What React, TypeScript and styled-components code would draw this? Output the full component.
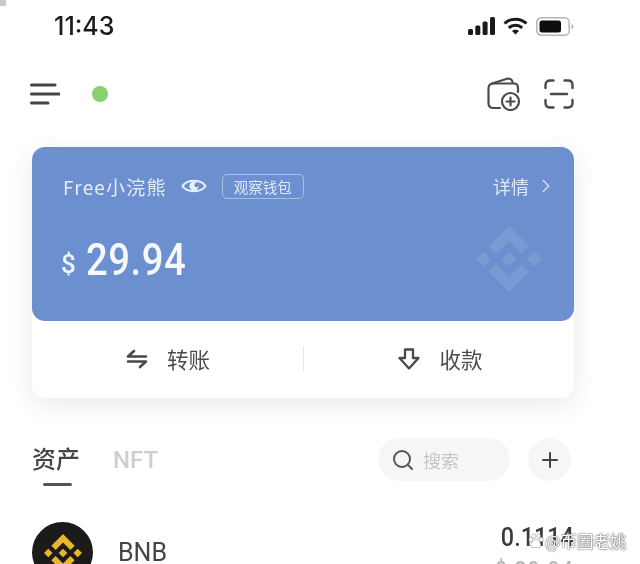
import { FC } from "react";
import styled, { createGlobalStyle } from "styled-components";
import { ChevronRight, Plus, Search } from "lucide-react";

const GlobalStyle = createGlobalStyle`
    html,
    body {
        margin: 0;
        padding: 0;
        background: #fff;
    }
    body {
        width: 640px;
        height: 564px;
        overflow: hidden;
        font-family: "Noto Sans CJK SC", "Roboto", sans-serif;
    }
`;

const Page = styled.div`
    position: relative;
    width: 640px;
    height: 564px;
    overflow: hidden;
    box-sizing: border-box;
    padding: 0 66px 0 32px;
    background: #fff;
    filter: blur(0.5px);
`;

const CornerMark = styled.div`
    position: absolute;
    left: 0;
    top: 0;
    width: 6px;
    height: 6px;
    background: #c9c9c9;
`;

const StatusBar = styled.div`
    height: 52px;
    display: flex;
    align-items: center;
    justify-content: space-between;
    padding-left: 22px;
`;

const Time = styled.div`
    font-family: "Inter", "Roboto", sans-serif;
    font-size: 25px;
    font-weight: 500;
    color: #1b1b1b;
`;

const StatusIcons = styled.div`
    display: flex;
    align-items: center;
    gap: 8px;
`;

const Header = styled.div`
    height: 36px;
    margin-top: 24px;
    display: flex;
    align-items: center;
    justify-content: space-between;
`;

const HeaderLeft = styled.div`
    display: flex;
    align-items: center;
    gap: 32px;
    margin-left: -2px;
`;

const HeaderRight = styled.div`
    display: flex;
    align-items: center;
    gap: 23px;
`;

const StatusDot = styled.span`
    width: 16px;
    height: 16px;
    border-radius: 50%;
    background: #85d26f;
`;

const Card = styled.div`
    margin-top: 35px;
    height: 251px;
    border-radius: 13px;
    background: #fff;
    box-shadow: 0 6px 26px rgba(0, 0, 0, 0.09);
    display: flex;
    flex-direction: column;
`;

const CardTop = styled.div`
    position: relative;
    height: 174px;
    box-sizing: border-box;
    padding: 24px 17px 0 31px;
    border-radius: 13px;
    background: #6b8fcf;
    color: #e6edf8;
`;

const NameRow = styled.div`
    display: flex;
    align-items: center;
    height: 30px;
`;

const WalletName = styled.span`
    font-size: 19px;
    letter-spacing: 1.2px;
    color: #e4ebf7;
`;

const EyeWrap = styled.span`
    display: flex;
    margin-left: 14px;
`;

const Tag = styled.span`
    margin-left: 15px;
    height: 25px;
    width: 82px;
    box-sizing: border-box;
    display: flex;
    align-items: center;
    justify-content: center;
    border: 1px solid #a9c0e6;
    border-radius: 5px;
    font-size: 14.5px;
    color: #dfe8f6;
`;

const Details = styled.span`
    margin-left: auto;
    display: flex;
    align-items: center;
    gap: 6px;
    font-size: 18px;
    color: #e0e8f6;
`;

const Balance = styled.div`
    margin-top: 30px;
    margin-left: -2px;
    display: flex;
    align-items: center;
    height: 58px;
`;

const Currency = styled.span`
    font-family: "Roboto", sans-serif;
    font-size: 26px;
    font-weight: 500;
    color: #eef3fb;
    margin-top: 8px;
`;

const Amount = styled.span`
    display: inline-block;
    margin-left: 10px;
    font-family: "Roboto", sans-serif;
    font-size: 44px;
    font-weight: 500;
    letter-spacing: 0.6px;
    color: #f6f8fc;
    transform: scaleX(0.87);
    transform-origin: left center;
`;

const CardLogo = styled.div`
    position: absolute;
    right: 32px;
    top: 79px;
    display: flex;
`;

const Actions = styled.div`
    flex: 1;
    display: grid;
    grid-template-columns: 1fr 1fr;
    align-items: center;
`;

const Action = styled.div<{ $divided?: boolean }>`
    height: 26px;
    margin-top: -2px;
    display: flex;
    align-items: center;
    justify-content: center;
    gap: 19px;
    padding-left: ${(p) => (p.$divided ? "3px" : "1px")};
    font-size: 21.5px;
    color: #4c4c4c;
    border-left: ${(p) => (p.$divided ? "1px solid #e6e6e6" : "none")};
`;

const TabsRow = styled.div`
    margin-top: 40px;
    height: 43px;
    display: flex;
    align-items: center;
    position: relative;
`;

const Tab = styled.span<{ $active?: boolean }>`
    position: relative;
    font-size: 24px;
    font-weight: 500;
    margin-right: 33px;
    margin-top: ${(p) => (p.$active ? "-4px" : "0")};
    color: ${(p) => (p.$active ? "#444" : "#cfcfcf")};
    font-family: ${(p) =>
        p.$active ? '"Noto Sans CJK SC", sans-serif' : '"Roboto", sans-serif'};
    ${(p) =>
        p.$active &&
        `&::after {
            content: "";
            position: absolute;
            left: 11px;
            bottom: -11px;
            width: 29px;
            height: 3px;
            background: #555;
            border-radius: 2px;
        }`}
`;

const SearchBox = styled.div`
    margin-left: auto;
    width: 132px;
    height: 43px;
    box-sizing: border-box;
    padding-left: 13px;
    border-radius: 22px;
    background: #f6f6f6;
    display: flex;
    align-items: center;
    gap: 8px;
    font-size: 18px;
    line-height: 38px;
    color: #c6c6c6;
`;

const RoundButton = styled.div`
    margin-left: 18px;
    margin-right: 3px;
    width: 43px;
    height: 43px;
    border-radius: 50%;
    background: #f6f6f6;
    display: flex;
    align-items: center;
    justify-content: center;
    color: #444;
`;

const TokenRow = styled.div`
    margin-top: 41px;
    display: flex;
    align-items: flex-start;
`;

const TokenLogo = styled.div`
    width: 61px;
    height: 61px;
    flex: none;
    border-radius: 50%;
    background: #1c1b19;
    display: flex;
    align-items: center;
    justify-content: center;
`;

const TokenName = styled.div`
    margin-left: 25px;
    margin-top: 16px;
    font-family: "Roboto", sans-serif;
    font-size: 25px;
    color: #444;
`;

const TokenValues = styled.div`
    margin-left: auto;
    margin-top: -1px;
    text-align: right;
    font-family: "Roboto", sans-serif;
    font-weight: 500;
    transform: scaleX(0.9);
    transform-origin: right center;
`;

const TokenAmount = styled.div`
    font-size: 26px;
    line-height: 32px;
    color: #3c3c3c;
`;

const TokenFiat = styled.div`
    margin-top: 3px;
    font-size: 24px;
    line-height: 28px;
    letter-spacing: 1px;
    color: #b8b8b8;
`;

const SiteMark = styled.div`
    position: absolute;
    left: 527px;
    top: 530px;
    display: flex;
    align-items: center;
    gap: 1px;
    font-size: 16.5px;
    line-height: 22px;
    color: #fff;
    text-shadow: 0 0 2px #555, 0 0 1px #444;
`;

const BinanceMark: FC<{ size: number; color: string }> = ({ size, color }) => (
    <svg width={size} height={size} viewBox="0 0 126.61 126.61" fill={color}>
        <path d="M38.73 53.2 63.31 28.63 87.9 53.22 102.2 38.92 63.31 0 24.43 38.91z" />
        <path d="M0 63.31 14.3 49.01 28.6 63.31 14.3 77.61z" />
        <path d="M38.73 73.41 63.31 97.99 87.9 73.4 102.2 87.69 63.31 126.61 24.43 87.7z" />
        <path d="M98 63.31 112.3 49.01 126.6 63.31 112.3 77.61z" />
        <path d="M77.83 63.3 63.31 48.78 48.8 63.29 63.31 77.81z" />
    </svg>
);

const SignalIcon = () => (
    <svg width="27" height="18" viewBox="0 0 27 18" fill="#1a1a1a">
        <rect x="0" y="12" width="5" height="6" rx="1.5" />
        <rect x="7.3" y="8.5" width="5" height="9.5" rx="1.5" />
        <rect x="14.6" y="4.5" width="5" height="13.5" rx="1.5" />
        <rect x="22" y="0" width="5" height="18" rx="1.5" />
    </svg>
);

const WifiIcon = () => (
    <svg width="25" height="18" viewBox="0 0 25 18" fill="none" stroke="#1a1a1a" strokeWidth="3">
        <path d="M1.5 6.5C7.5 .8 17.5 .8 23.5 6.5" />
        <path d="M5.8 10.8C9.5 7.3 15.5 7.3 19.2 10.8" />
        <path d="M12.5 17.5 9 14C10.8 12.3 14.2 12.3 16 14Z" fill="#1a1a1a" stroke="none" />
    </svg>
);

const BatteryIcon = () => (
    <svg width="38" height="19" viewBox="0 0 38 19">
        <rect x="0.8" y="0.8" width="32.4" height="17.4" rx="4.5" fill="none" stroke="#b5b5b5" strokeWidth="1.5" />
        <rect x="3.5" y="3.5" width="21.5" height="12" rx="2.5" fill="#0d0d0d" />
        <path d="M35.5 7v5c1.3-.4 2-1.4 2-2.5s-.7-2.1-2-2.5z" fill="#b5b5b5" />
    </svg>
);

const MenuIcon = () => (
    <svg width="30" height="24" viewBox="0 0 30 24" fill="none" stroke="#444" strokeWidth="3" strokeLinecap="round">
        <path d="M1.5 3H25" />
        <path d="M1.5 12H29" />
        <path d="M1.5 21H18" />
    </svg>
);

const WalletAddIcon = () => (
    <svg width="34" height="34" viewBox="0 0 34 34" fill="none" stroke="#4a4a4a" strokeWidth="2.2" strokeLinecap="round">
        <path d="M13 31H6.5C3.5 31 1.5 29 1.5 26V11.5C1.5 8.5 3.5 6.5 6.5 6.5H27C29.5 6.5 31 8.5 31 11V15" />
        <path d="M5 6.5 20 1.8C23 1 25 2.5 25.5 5" />
        <circle cx="23.5" cy="24.5" r="8.5" />
        <path d="M23.5 20.5V28.5M19.5 24.5H27.5" />
    </svg>
);

const ScanIcon = () => (
    <svg width="30" height="30" viewBox="0 0 30 30" fill="none" stroke="#4a4a4a" strokeWidth="2.4" strokeLinecap="round">
        <path d="M1.5 9V6C1.5 3 3.5 1.5 6 1.5H9.5" />
        <path d="M20.5 1.5H24C26.5 1.5 28.5 3 28.5 6V9" />
        <path d="M1.5 21V24C1.5 27 3.5 28.5 6 28.5H9.5" />
        <path d="M20.5 28.5H24C26.5 28.5 28.5 27 28.5 24V21" />
        <path d="M7 15H23" />
    </svg>
);

const EyeIcon = () => (
    <svg width="26" height="20" viewBox="0 0 26 20" fill="none" stroke="#eaf0fa" strokeWidth="2">
        <path d="M1.5 10C6 3 20 3 24.5 10C20 17 6 17 1.5 10Z" />
        <circle cx="13" cy="10" r="4.6" fill="#eaf0fa" stroke="none" />
        <circle cx="15.6" cy="9" r="2.2" fill="#6b8fcf" stroke="none" />
    </svg>
);

const TransferIcon = () => (
    <svg width="22" height="20" viewBox="0 0 22 20" fill="none" stroke="#484848" strokeWidth="2.6" strokeLinecap="round" strokeLinejoin="round">
        <path d="M8 2 2 7.5H20" />
        <path d="M2 12.5H20L14 18" />
    </svg>
);

const ReceiveIcon = () => (
    <svg width="22" height="22" viewBox="0 0 22 22" fill="none" stroke="#484848" strokeWidth="2.3" strokeLinejoin="round">
        <path d="M7 1.5H15V10H20.5L11 20.5 1.5 10H7Z" />
    </svg>
);

const PawIcon = () => (
    <svg width="17" height="18" viewBox="0 0 22 22" fill="#fff" stroke="#777" strokeWidth="0.6">
        <ellipse cx="5" cy="9" rx="2.5" ry="3" />
        <ellipse cx="9" cy="4.5" rx="2.5" ry="3" />
        <ellipse cx="15" cy="4.5" rx="2.5" ry="3" />
        <ellipse cx="18.5" cy="9" rx="2.5" ry="3" />
        <path d="M11.5 9C8 9 4.5 14 5 17.5 5.5 20.5 9 19.5 11.5 19.5 14 19.5 17.5 20.5 18 17.5 18.5 14 15 9 11.5 9Z" />
    </svg>
);

const App: FC = () => {
    return (
        <Page>
            <GlobalStyle />
            <CornerMark />
            <StatusBar>
                <Time>11:43</Time>
                <StatusIcons>
                    <SignalIcon />
                    <WifiIcon />
                    <BatteryIcon />
                </StatusIcons>
            </StatusBar>
            <Header>
                <HeaderLeft>
                    <MenuIcon />
                    <StatusDot />
                </HeaderLeft>
                <HeaderRight>
                    <WalletAddIcon />
                    <ScanIcon />
                </HeaderRight>
            </Header>
            <Card>
                <CardTop>
                    <NameRow>
                        <WalletName>Free小浣熊</WalletName>
                        <EyeWrap>
                            <EyeIcon />
                        </EyeWrap>
                        <Tag>观察钱包</Tag>
                        <Details>
                            详情
                            <ChevronRight size={22} strokeWidth={1.5} color="#d4dff2" />
                        </Details>
                    </NameRow>
                    <Balance>
                        <Currency>$</Currency>
                        <Amount>29.94</Amount>
                    </Balance>
                    <CardLogo>
                        <BinanceMark size={66} color="#7a9ad4" />
                    </CardLogo>
                </CardTop>
                <Actions>
                    <Action>
                        <TransferIcon />
                        转账
                    </Action>
                    <Action $divided>
                        <ReceiveIcon />
                        收款
                    </Action>
                </Actions>
            </Card>
            <TabsRow>
                <Tab $active>资产</Tab>
                <Tab>NFT</Tab>
                <SearchBox>
                    <Search size={24} strokeWidth={2} color="#555" />
                    搜索
                </SearchBox>
                <RoundButton>
                    <Plus size={24} strokeWidth={2} />
                </RoundButton>
            </TabsRow>
            <TokenRow>
                <TokenLogo>
                    <BinanceMark size={38} color="#e8b52e" />
                </TokenLogo>
                <TokenName>BNB</TokenName>
                <TokenValues>
                    <TokenAmount>0.1114</TokenAmount>
                    <TokenFiat>$ 29.94</TokenFiat>
                </TokenValues>
            </TokenRow>
            <SiteMark>
                <PawIcon />
                @币圈老姚
            </SiteMark>
        </Page>
    );
};

export default App;
